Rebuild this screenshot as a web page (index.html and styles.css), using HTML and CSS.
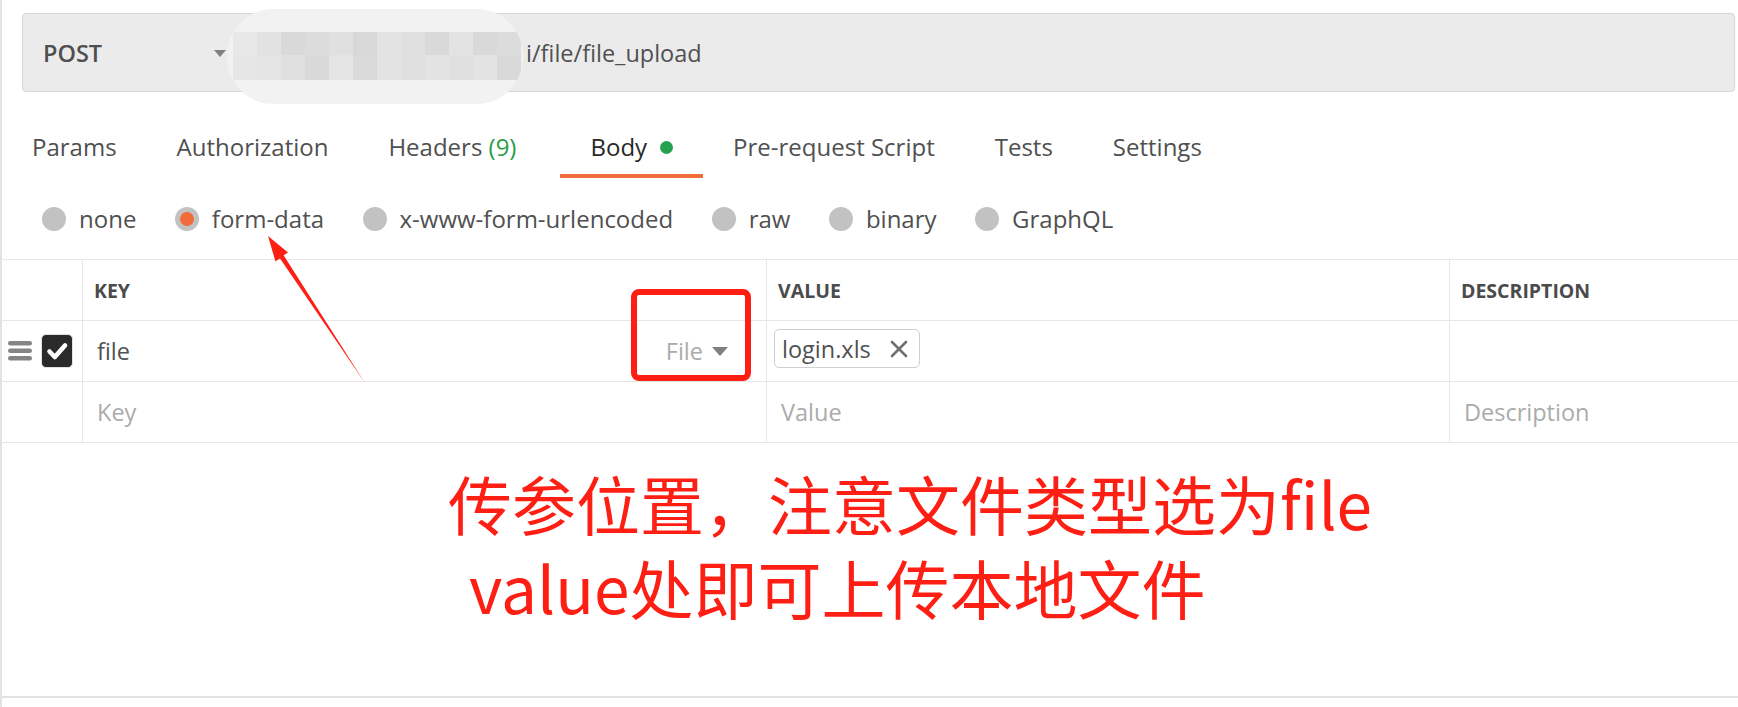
FILE: index.html
```html
<!DOCTYPE html>
<html lang="zh-CN">
<head>
<meta charset="utf-8">
<title>Postman - file upload</title>
<link rel="stylesheet" href="styles.css">
</head>
<body>
<div class="page">
  <div class="urlbar">
    <div class="method"><span>POST</span><span class="caret"></span></div>
    <div class="url">i/file/file_upload</div>
  </div>

  <nav class="tabs">
    <span class="tab">Params</span>
    <span class="tab">Authorization</span>
    <span class="tab headers">Headers <span class="count">(9)</span></span>
    <span class="tab active">Body<span class="dot"></span></span>
    <span class="tab">Pre-request Script</span>
    <span class="tab">Tests</span>
    <span class="tab">Settings</span>
  </nav>

  <div class="modes">
    <span class="mode"><span class="radio"></span>none</span>
    <span class="mode"><span class="radio on"></span>form-data</span>
    <span class="mode"><span class="radio"></span>x-www-form-urlencoded</span>
    <span class="mode"><span class="radio"></span>raw</span>
    <span class="mode"><span class="radio"></span>binary</span>
    <span class="mode"><span class="radio"></span>GraphQL</span>
  </div>

  <div class="table">
    <div class="row head">
      <div class="cell c0"></div>
      <div class="cell">KEY</div>
      <div class="cell">VALUE</div>
      <div class="cell">DESCRIPTION</div>
    </div>
    <div class="row">
      <div class="cell c0">
        <svg class="handle" width="24" height="20" viewBox="0 0 24 20"><rect x="0" y="0" width="24" height="4.6" rx="2.3" fill="#858585"/><rect x="0" y="7.5" width="24" height="4.6" rx="2.3" fill="#858585"/><rect x="0" y="15" width="24" height="4.6" rx="2.3" fill="#858585"/></svg>
        <span class="check"><svg width="30" height="32" viewBox="0 0 30 32"><path d="M7.5 16.5 L12.8 22 L23 10.5" fill="none" stroke="#fff" stroke-width="4.6" stroke-linecap="round" stroke-linejoin="round"/></svg></span>
      </div>
      <div class="cell body key"><span>file</span><span class="type">File<span class="tcaret"></span></span></div>
      <div class="cell body"><span class="chip">login.xls<svg class="x" width="18" height="18" viewBox="0 0 18 18"><path d="M2 2 L16 16 M16 2 L2 16" stroke="#707070" stroke-width="2.6" stroke-linecap="round"/></svg></span></div>
      <div class="cell body"></div>
    </div>
    <div class="row">
      <div class="cell c0"></div>
      <div class="cell body ph">Key</div>
      <div class="cell body ph">Value</div>
      <div class="cell body ph">Description</div>
    </div>
  </div>

  <div class="canvas">
    <p class="note">传参位置，注意文件类型选为file<br><span class="indent"></span>value处即可上传本地文件</p>
  </div>

  <div class="blur">
    <div class="mosaic">
      <i style="background:#e8e8e8"></i><i style="background:#e2e2e2"></i><i style="background:#d9d9d9"></i><i style="background:#dcdcdc"></i><i style="background:#e0e0e0"></i><i style="background:#d8d8d8"></i><i style="background:#e3e3e3"></i><i style="background:#e0e0e0"></i><i style="background:#d9d9d9"></i><i style="background:#e3e3e3"></i><i style="background:#d9d9d9"></i><i style="background:#dcdcdc"></i>
      <i style="background:#e6e6e6"></i><i style="background:#e4e4e4"></i><i style="background:#e0e0e0"></i><i style="background:#d9d9d9"></i><i style="background:#e4e4e4"></i><i style="background:#dadada"></i><i style="background:#e3e3e3"></i><i style="background:#e0e0e0"></i><i style="background:#e3e3e3"></i><i style="background:#e0e0e0"></i><i style="background:#e3e3e3"></i><i style="background:#d9d9d9"></i>
    </div>
  </div>

  <div class="redbox"></div>

  <svg class="arrow" width="110" height="160" viewBox="0 0 110 160">
    <polygon points="105,153 23.6,25.2 28,22.5 8,6 15.4,31.2 20,28.4" fill="#fe1f14"/>
  </svg>
</div>
</body>
</html>
```

FILE: styles.css
```css
body {
  margin: 0;
  background: #ffffff;
}

.page {
  position: relative;
  height: 707px;
  box-sizing: border-box;
  border-left: 2px solid #e3e3e3;
  padding-bottom: 9px;
  display: flex;
  flex-direction: column;
  font-family: "Open Sans", "Liberation Sans", sans-serif;
  font-size: 23.5px;
  color: #505050;
  overflow: hidden;
}

/* URL bar */
.urlbar {
  margin: 13px 3px 0 20px;
  height: 79px;
  box-sizing: border-box;
  border: 1px solid #d6d6d6;
  border-radius: 4px;
  background: #ebebeb;
  display: flex;
  align-items: center;
  flex: none;
}

.method {
  display: flex;
  align-items: center;
  width: 183px;
  padding-left: 20px;
  font-weight: 600;
  color: #4f4f4f;
}

.caret {
  margin-left: auto;
  margin-top: 2px;
  width: 0;
  height: 0;
  border-left: 6.5px solid transparent;
  border-right: 6.5px solid transparent;
  border-top: 7px solid #808080;
}

.url {
  margin-left: 300px;
  color: #505050;
}

/* Tabs */
.tabs {
  display: flex;
  margin-top: 39px;
  flex: none;
  font-size: 24px;
}

.tab {
  padding: 0 30px 11px;
  line-height: 32px;
  border-bottom: 4px solid transparent;
  white-space: nowrap;
  display: flex;
  align-items: center;
}

.tab.headers {
  padding-right: 44px;
}

.tab.active {
  border-bottom-color: #f26b3a;
  color: #282828;
}

.count {
  color: #2a9d4c;
  margin-left: 0.26em;
}

.dot {
  width: 13px;
  height: 13px;
  border-radius: 50%;
  background: #26a150;
  margin-left: 13px;
  margin-top: 1px;
}

/* Body modes */
.modes {
  display: flex;
  align-items: center;
  height: 81px;
  padding-left: 40px;
  border-bottom: 1px solid #e6e6e6;
  flex: none;
  font-size: 24px;
}

.mode {
  display: flex;
  align-items: center;
  margin-right: 38.5px;
  white-space: nowrap;
}

.radio {
  width: 24px;
  height: 24px;
  border-radius: 50%;
  background: #c2c2c2;
  margin-right: 13px;
  display: flex;
  align-items: center;
  justify-content: center;
}

.radio.on::after {
  content: "";
  width: 14px;
  height: 14px;
  border-radius: 50%;
  background: #f26b3a;
}

/* Table */
.table {
  flex: none;
}

.row {
  display: grid;
  grid-template-columns: 81px 684px 683px 1fr;
  height: 60px;
  border-bottom: 1px solid #e6e6e6;
}

.cell {
  border-right: 1px solid #e6e6e6;
  display: flex;
  align-items: center;
  padding-left: 11px;
  white-space: nowrap;
}

.cell:last-child {
  border-right: none;
}

.head .cell {
  font-size: 19.5px;
  font-weight: 700;
  color: #4b4b4b;
}

.cell.c0 {
  padding-left: 6px;
}

.handle {
  flex: none;
}

.check {
  margin-left: 9px;
  width: 30px;
  height: 32px;
  border: 1px solid #e2e2e2;
  border-radius: 5px;
  background: #2a2a2a;
  display: flex;
}

.cell.body {
  padding-left: 14px;
}

.cell.key {
  justify-content: space-between;
  padding-right: 38px;
}

.type {
  color: #ababab;
  display: flex;
  align-items: center;
}

.tcaret {
  margin-left: 9px;
  margin-top: 1px;
  width: 0;
  height: 0;
  border-left: 8px solid transparent;
  border-right: 8px solid transparent;
  border-top: 9px solid #808080;
}

.chip {
  margin-left: -7px;
  height: 39px;
  box-sizing: border-box;
  border: 1px solid #cfcfcf;
  border-radius: 5px;
  padding: 0 11px 0 7px;
  display: flex;
  align-items: center;
  margin-top: -5px;
}

.x {
  margin-left: 19px;
}

.ph {
  color: #ababab;
}

/* Annotation area */
.canvas {
  flex: 1;
  border-bottom: 2px solid #e2e2e2;
}

.note {
  margin: 17px 0 0 446px;
  font-family: "Noto Sans CJK SC", "Noto Sans", sans-serif;
  font-size: 64px;
  line-height: 84px;
  color: #fe1f14;
  white-space: nowrap;
}

.indent {
  display: inline-block;
  width: 21px;
}

/* Overlays */
.blur {
  position: absolute;
  left: 225px;
  top: 9px;
  width: 296px;
  height: 95px;
  border-radius: 46px / 47px;
  background: #f2f2f2;
  overflow: hidden;
}

.mosaic {
  margin: 23px 0 0 6px;
  display: grid;
  grid-template-columns: repeat(12, 24px);
  grid-template-rows: 23px 25px;
}

.mosaic i {
  display: block;
}

.redbox {
  position: absolute;
  left: 629px;
  top: 289px;
  width: 120px;
  height: 92px;
  box-sizing: border-box;
  border: 6px solid #fe1f14;
  border-radius: 8px;
}

.arrow {
  position: absolute;
  left: 258px;
  top: 230px;
}
```
